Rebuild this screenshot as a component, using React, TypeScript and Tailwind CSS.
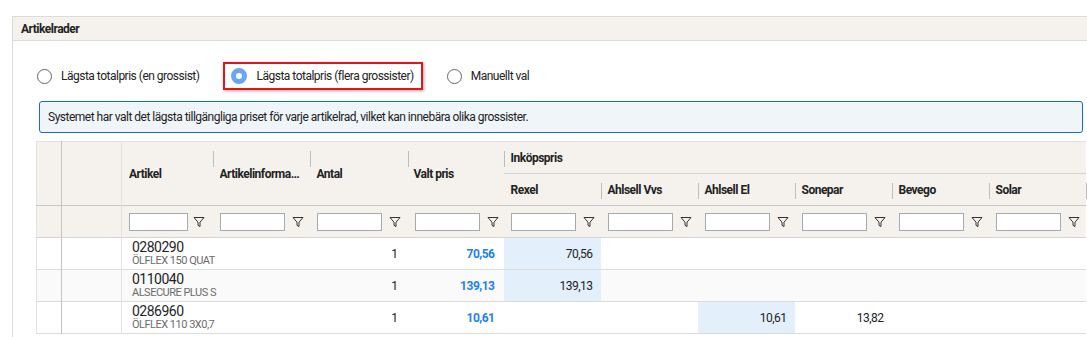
import React, { useState } from 'react';

const font = { fontFamily: 'Roboto, "Liberation Sans", sans-serif' };

const FilterIcon = () => (
  <svg width="12" height="12" viewBox="0 0 12 12" className="shrink-0">
    <path d="M1 1.5h10L7 6.2v4.3L5 9.4V6.2z" fill="none" stroke="#333" strokeWidth="1" strokeLinejoin="round" />
  </svg>
);

const FilterCell = ({ narrow }: { narrow?: boolean }) => (
  <td className="h-[32px] border-b border-[#d4d4d4] px-[7px] align-middle">
    <div className={`flex items-center ${narrow ? 'gap-[5px]' : 'gap-[7px]'}`}>
      <input className={`h-[18px] ${narrow ? 'w-[59px]' : 'w-[65px]'} border border-[#a3acb0] bg-white`} />
      <FilterIcon />
    </div>
  </td>
);

const Sep = () => <span className="absolute left-0 top-[9px] w-px h-[16px] bg-[#bdbdbd]" />;

type Row = { code: string; name: string; antal: number; valt: string; prices: (string | null)[]; best: number };

const rows: Row[] = [
  { code: '0280290', name: 'ÖLFLEX 150 QUAT', antal: 1, valt: '70,56', prices: ['70,56', null, null, null, null, null], best: 0 },
  { code: '0110040', name: 'ALSECURE PLUS S', antal: 1, valt: '139,13', prices: ['139,13', null, null, null, null, null], best: 0 },
  { code: '0286960', name: 'ÖLFLEX 110 3X0,7', antal: 1, valt: '10,61', prices: [null, null, '10,61', '13,82', null, null], best: 2 },
];

const suppliers = ['Rexel', 'Ahlsell Vvs', 'Ahlsell El', 'Sonepar', 'Bevego', 'Solar'];

export default function App() {
  const [mode, setMode] = useState('flera');

  const radios = [
    { id: 'en', label: 'Lägsta totalpris (en grossist)' },
    { id: 'flera', label: 'Lägsta totalpris (flera grossister)' },
    { id: 'manuell', label: 'Manuellt val' },
  ];

  return (
    <div className="w-[1087px] h-[337px] overflow-hidden bg-white text-[#222] tracking-[-0.5px]" style={font}>
      <div className="ml-[12px] mt-[16px] border-l border-t border-[#dcdcdc] h-[330px]">
        <div className="h-[24px] bg-[#f5f2ee] border-b border-[#dcdcdc] flex items-center pl-[8px] text-[12px] font-bold">
          Artikelrader
        </div>

        {/* Radio options */}
        <div className="flex items-center gap-[24px] h-[28px] mt-[21px] pl-[24px]">
          {radios.map(r => {
            const selected = mode === r.id;
            return (
              <label
                key={r.id}
                onClick={() => setMode(r.id)}
                className={`flex items-center gap-[9px] cursor-pointer text-[12px] ${selected ? 'h-[28px] border-2 border-[#e3141a] shadow-[1px_1px_3px_rgba(0,0,0,0.35)] pl-[6px] pr-[7px]' : ''}`}
              >
                {selected ? (
                  <span className="w-[16px] h-[16px] rounded-full border-[5px] border-[#6aa6f2] bg-white" />
                ) : (
                  <span className="w-[15px] h-[15px] rounded-full border border-[#666] bg-white" />
                )}
                {r.label}
              </label>
            );
          })}
        </div>

        {/* Info box */}
        <div className="ml-[26px] mr-[4px] mt-[11px] h-[32px] border border-[#1a6bc7] rounded-[3px] bg-[#f0f5fa] flex items-center pl-[8px] text-[12px]">
          Systemet har valt det lägsta tillgängliga priset för varje artikelrad, vilket kan innebära olika grossister.
        </div>

        {/* Grid */}
        <div className="ml-[23px] mt-[8px]">
          <table className="border-collapse table-fixed border-l border-t border-[#e3e3e3]" style={{ width: 1049 }}>
            <colgroup>
              <col className="w-[25px]" />
              <col className="w-[60px]" />
              <col className="w-[91px]" />
              <col className="w-[97px]" />
              <col className="w-[98px]" />
              <col className="w-[96px]" />
              {suppliers.map(s => <col key={s} className="w-[97px]" />)}
            </colgroup>
            <thead className="bg-[#f5f2ee] text-[12px] font-bold">
              <tr className="h-[32px]">
                <th rowSpan={2} className="border-r border-[#c4c4c4]" />
                <th rowSpan={2} className="border-r border-[#e2e2e2]" />
                <th rowSpan={2} className="relative text-left px-[7px] font-bold">Artikel</th>
                <th rowSpan={2} className="relative text-left px-[7px] font-bold"><Sep /><span className="block truncate">Artikelinformation</span></th>
                <th rowSpan={2} className="relative text-left px-[7px] font-bold"><Sep />Antal</th>
                <th rowSpan={2} className="relative text-left px-[6px] font-bold"><Sep />Valt pris</th>
                <th colSpan={6} className="relative text-left px-[7px] font-bold border-b border-[#d4d4d4]"><Sep />Inköpspris</th>
              </tr>
              <tr className="h-[32px]">
                {suppliers.map((s, i) => (
                  <th key={s} className="relative text-left px-[7px] font-bold">
                    {i > 0 && <Sep />}
                    {s}
                    {i === suppliers.length - 1 && <span className="absolute right-[-1px] top-[9px] w-px h-[16px] bg-[#bdbdbd]" />}
                  </th>
                ))}
              </tr>
              <tr className="border-t border-[#c8c8c8]">
                <td className="h-[32px] border-b border-r border-[#c4c4c4] border-b-[#d4d4d4]" />
                <td className="border-b border-r border-[#e2e2e2] border-b-[#d4d4d4]" />
                <FilterCell narrow />
                <FilterCell />
                <FilterCell />
                <FilterCell />
                {suppliers.map(s => <FilterCell key={s} />)}
              </tr>
            </thead>
            <tbody>
              {rows.map((r, ri) => (
                <tr key={r.code} className={`h-[32px] border-b border-[#dcdcdc] ${ri === 1 ? 'bg-[#fafafa]' : 'bg-white'}`}>
                  <td className="border-r border-[#c4c4c4]" />
                  <td className="border-r border-[#e2e2e2]" />
                  <td className="px-[10px] align-middle">
                    <div className="text-[14px] leading-[14px] text-[#1f1f1f]">{r.code}</div>
                    <div className="text-[11px] leading-[13px] text-[#6b6b6b] whitespace-nowrap">{r.name}</div>
                  </td>
                  <td />
                  <td className="text-right pr-[10px] text-[12px]">{r.antal}</td>
                  <td className="text-right pr-[9px] text-[12px] font-bold text-[#1e82f0]">{r.valt}</td>
                  {r.prices.map((p, pi) => (
                    <td key={pi} className={`text-right pr-[8px] text-[12px] ${pi === r.best ? 'bg-[#e3f0fc]' : ''}`}>{p}</td>
                  ))}
                </tr>
              ))}
            </tbody>
          </table>
        </div>
      </div>
    </div>
  );
}
